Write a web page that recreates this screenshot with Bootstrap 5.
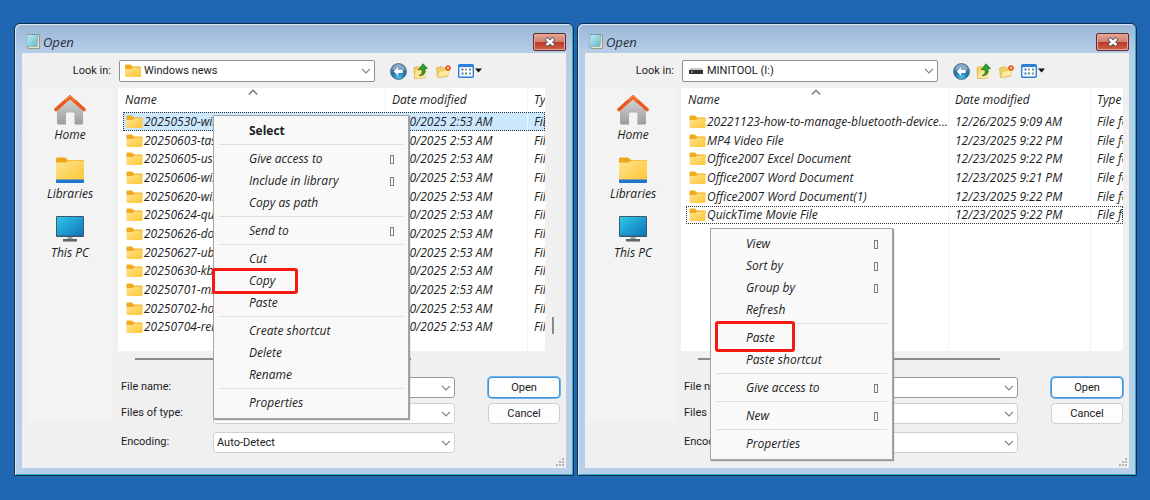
<!DOCTYPE html>
<html lang="en">
<head>
<meta charset="utf-8">
<meta name="viewport" content="width=device-width, initial-scale=1">
<title>Open</title>
<link href="https://cdn.jsdelivr.net/npm/bootstrap@5.3.0/dist/css/bootstrap.min.css" rel="stylesheet">
<style>
  body { background: #1f67b3; font-family: "Open Sans", "Noto Sans", sans-serif; font-size: 12px; line-height: 16px; color: #1c1c1c; }
  .desktop { padding: 23px 13px 24px 14px; gap: 3px; }
  .slant { font-style: italic; }
  .plain { font-family: Roboto, "Liberation Sans", sans-serif; font-size: 11px; }

  /* window frame */
  .dialog { flex: 1 1 0; min-width: 0; border: 1px solid #0f2f52; border-radius: 6px 6px 1px 1px; padding: 0 7px 7px;
    background: linear-gradient(#9bb6d6, #b7cee9 29px, #b7cfea);
    box-shadow: inset 1px 1px 0 #dbe7f4, inset -1px -1px 0 #35aab9; }
  .titlebar { height: 29px; padding: 5px 0 0 3px; }
  .titlebar h1 { font-size: 13px; line-height: 16px; margin: 5px 0 0 2px; font-weight: 400; color: #2a2f3a; }
  .close-btn { width: 33px; height: 18px; padding: 0; border: 1px solid #5d2a33; border-radius: 2px; line-height: 0;
    background: linear-gradient(#e2a496, #d17f6e 50%, #b93a25 50%, #cf5f45); box-shadow: inset 0 0 0 1px #e5a79c; }
  .client { background: #f0f0f0; }

  /* look-in bar */
  .lookbar { height: 35px; padding-top: 7px; }
  .lookbar label { width: 97px; padding: 3px 8px 0 0; }
  .lookbox { width: 256px; height: 22px; border: 1px solid #8f8f8f; border-radius: 2px; background: #fff; padding-left: 5px; }
  .tools { padding: 3px 0 0 15px; gap: 6px; }
  .tools button { border: 0; background: none; padding: 0; line-height: 0; }
  .pick { appearance: none; font-size: 11px; line-height: 16px; color: #1c1c1c; padding: 0 20px 0 3px; border: 1px solid #d0d0d0; border-radius: 3px;
    background: #fff url("data:image/svg+xml,%3Csvg xmlns='http://www.w3.org/2000/svg' width='10' height='6'%3E%3Cpath d='M1 .8 5 4.8 9 .8' fill='none' stroke='%23808080' stroke-width='1.2'/%3E%3C/svg%3E") no-repeat right 3px center; }
  .lookbox .pick { border: 0; flex: 1; height: 20px; }

  /* places bar */
  .client-body { padding-left: 5px; gap: 5px; }
  .places { width: 86px; height: 334px; background: #f3f3f3; padding-top: 6px; }
  .places a { height: 59px; color: #1c1c1c; }
  .places svg { margin-bottom: 1px; }

  /* file list */
  .main-pane { min-width: 0; }
  .list-row { height: 263px; }
  .list-row.edge { padding-right: 6px; }
  .list-box { flex: 1; min-width: 0; background: #fff; overflow: hidden; padding-left: 5px; }
  .files { table-layout: fixed; width: 100%; height: 100%; border-collapse: separate; border-spacing: 0; white-space: nowrap; }
  .files th { height: 24px; font-weight: 400; padding: 0 0 0 2px; position: relative; }
  .files td { padding: 0; line-height: 16px; overflow: hidden; }
  .files tbody tr { height: 19px; }
  .files tbody tr:nth-child(3n) { height: 18px; }
  .files tbody tr.filler { height: auto; }
  .files th + th, .files td + td { border-left: 1px solid #edf4fb; padding-left: 6px; }
  .files .c-name { width: 262px; }
  .files .c-date { width: 142px; }
  .files .name-cell { gap: 1px; padding-left: 3px; }
  .files .sort { position: absolute; left: 125px; top: 1px; }
  .picked { outline: 1px dotted #333; outline-offset: -1px; }
  .picked.hot { background: #cce8ff; }
  .v-track { width: 21px; padding: 229px 0 0 7px; }
  .v-track span { display: block; width: 2px; height: 17px; background: #8b8b8b; }
  .h-track { height: 26px; padding: 7px 0 0 17px; }
  .h-track span { display: block; height: 2px; background: #8b8b8b; }

  /* fields */
  .fields { display: grid; grid-template: 21px 21px 21px / 92px 242px 105px; row-gap: 5px; padding: 0 7px 18px 3px; }
  .fields .r1, .fields .r2, .fields .r3 { height: 21px; }
  .fields .r3 { margin-top: 3px; }
  .fields label { padding-top: 2px; }
  .fields .strong { border-color: #999; }
  .fields button { margin-left: 33px; width: 72px; padding: 0; font-size: 11px; line-height: 16px; border: 1px solid #d0d0d0; border-radius: 4px; background: #fdfdfd; color: #1c1c1c; }
  .fields .go { border-color: #3a93dc; box-shadow: 0 0 0 1px #6fb2e8; }
  .grip { position: absolute; right: 9px; bottom: 9px; }

  /* context menus */
  .ctx { position: absolute; border: 1px solid #a5a5a5; background: #f9f9f9; padding: 4px 0; box-shadow: 1px 1px 1px #9a9a9a; }
  .ctx-left { left: 198px; top: 91px; width: 196px; }
  .ctx-right { left: 132px; top: 204px; width: 183px; }
  .ctx button { display: flex; justify-content: space-between; align-items: center; position: relative; width: 100%; height: 22px; border: 0; background: none;
    padding: 0 14px 0 35px; font-size: 12px; font-style: inherit; line-height: 16px; color: #1c1c1c; }
  .ctx hr { margin: 2px 5px 3px; border: 0; height: 1px; background: #dcdcdc; opacity: 1; }
  .ctx i { width: 4px; height: 9px; border: 1px solid #7d7d7d; }
  .boxed::after { content: ""; position: absolute; border: 3px solid #f5190f; border-radius: 3px; }
  .box-copy::after { left: -2px; top: -2px; bottom: -2px; width: 86px; }
  .box-paste::after { left: 4px; top: -6px; bottom: -3px; width: 80px; }
</style>
</head>
<body>
<svg width="0" height="0" class="position-absolute" aria-hidden="true">
  <defs>
    <linearGradient id="gFold" x1="0" y1="0" x2="1" y2="1"><stop offset="0" stop-color="#ffe391"/><stop offset="1" stop-color="#fcc634"/></linearGradient>
    <linearGradient id="gHome" x1="0" y1="0" x2="0" y2="1"><stop offset="0" stop-color="#d8d8d8"/><stop offset="1" stop-color="#9c9c9c"/></linearGradient>
    <linearGradient id="gPc" x1="0" y1="0" x2="1" y2="1"><stop offset="0" stop-color="#2fc9e6"/><stop offset="1" stop-color="#0f73bd"/></linearGradient>
    <radialGradient id="gBack" cx=".5" cy=".85" r=".8"><stop offset="0" stop-color="#4cc6ea"/><stop offset=".5" stop-color="#2370a8"/><stop offset="1" stop-color="#5f7f9c"/></radialGradient>
    <linearGradient id="gPad" x1="0" y1="0" x2="1" y2="1"><stop offset="0" stop-color="#c9f1f5"/><stop offset="1" stop-color="#5db7c8"/></linearGradient>
  </defs>
  <symbol id="folder" viewBox="0 0 16 14"><path d="M0 1.5Q0 .5 1 .5H5.5L7.5 2.5H15Q16 2.5 16 3.500V6H0Z" fill="#f2ab1c"/><path d="M0 5H6L8 3.500H15Q16 3.500 16 4.500V12Q16 13 15 13H1Q0 13 0 12Z" fill="url(#gFold)"/></symbol>
  <symbol id="home" viewBox="0 0 32 32"><path d="M3 14 16 3 29 14V29Q29 30.500 27.500 30.500H20.500V20Q20.500 18.500 19 18.500H13.500Q12 18.500 12 20V30.500H5Q3 30.500 3 29Z" fill="url(#gHome)"/><path d="M2 15.500 16 3 30 15.500" fill="none" stroke="#ea5a20" stroke-width="3.600" stroke-linejoin="round" stroke-linecap="round"/><path d="M11 6.500 16 2.200 21 6.500" fill="none" stroke="#f58a3c" stroke-width="1.500"/></symbol>
  <symbol id="library" viewBox="0 0 32 32"><path d="M2 6Q2 4.500 3.500 4.500H11L14 7H29Q30 7 30 8V14H2Z" fill="#efa51a"/><path d="M2 9.500H12L14.500 7.500H29Q30 7.500 30 8.500V28H2Z" fill="url(#gFold)"/><path d="M2 26.500H30V29Q30 30 29 30H3Q2 30 2 29Z" fill="#1b76cc"/></symbol>
  <symbol id="pc" viewBox="0 0 32 32"><rect x="2" y="4" width="28" height="21" rx="1" fill="#3c5a6b"/><rect x="3" y="5" width="26" height="18.500" fill="url(#gPc)"/><path d="M13.500 25H18.500V27H13.500Z" fill="#9aa3a8"/><path d="M9 27H23V29.500H9Z" fill="#59636a"/></symbol>
  <symbol id="notepad" viewBox="0 0 16 16"><path d="M3 2H14.500V15.500H3Z" fill="#e9e2c4" stroke="#8f8a72" stroke-width=".8"/><path d="M2.500 1.500H13L12 13.500H1Z" fill="url(#gPad)" stroke="#7ba9b8" stroke-width=".6"/><path d="M3 1.500H13" stroke="#777" stroke-width="1.200" stroke-dasharray="1 1"/></symbol>
  <symbol id="back" viewBox="0 0 16 16"><circle cx="8" cy="8" r="7.500" fill="url(#gBack)" stroke="#43617c" stroke-width=".7"/><path d="M1.800 6Q4 1.200 8 1.200T14.200 6Q8 8 1.800 6Z" fill="#dbe8f2" opacity=".45"/><path d="M7.500 4 3.500 8 7.500 12V9.300H12V6.700H7.500Z" fill="#fff"/></symbol>
  <symbol id="up" viewBox="0 0 16 16"><path d="M1 4.500 5 3.500 6 5H12V15L1.500 15.500Z" fill="#f2cf62" stroke="#d3a534" stroke-width=".6"/><path d="M3 8H14L12 15H1.500Z" fill="#fbe594"/><path d="M6 12.500Q10 12 9 6.500H5.500L10 .8 14.500 5.500H12Q13 13 6 12.500Z" fill="#33a02c" stroke="#156b1b" stroke-width=".7"/></symbol>
  <symbol id="newfolder" viewBox="0 0 16 16"><path d="M1 5 6 3.500 7 5H12V13.500L2 14.500Z" fill="#f2cf62" stroke="#d3a534" stroke-width=".6"/><path d="M4 8.500 14.500 6.500 12 13 2 14.500Z" fill="#fdeaa4" stroke="#dfb64d" stroke-width=".5"/><g stroke="#e8491d" stroke-width="1.300"><path d="M12.500 2V8M9.500 5H15.500M10.500 3 14.500 7M14.500 3 10.500 7"/></g><circle cx="12.500" cy="5" r="1.200" fill="#ffd27a"/></symbol>
  <symbol id="views" viewBox="0 0 24 16"><rect x=".7" y="1.700" width="14.600" height="12.600" rx="1" fill="#fff" stroke="#2c7fdb" stroke-width="1.400"/><path d="M1 3H15" stroke="#2c7fdb" stroke-width="2.200"/><path d="M3.500 6.500H5.500M3.500 10.500H5.500" stroke="#4a70d8" stroke-width="2"/><path d="M7 6.500H9M11 10.500H13" stroke="#8a8fc8" stroke-width="2"/><path d="M11 6.500H13M7 10.500H9" stroke="#4aa04a" stroke-width="2"/><path d="M17 5.500H24L20.500 9.500Z" fill="#111"/></symbol>
  <symbol id="drive" viewBox="0 0 14 6"><path d="M2 0H12L14 2H0Z" fill="#c5c5c5"/><rect y="2" width="14" height="4" rx=".5" fill="#333"/><rect x="2" y="3.200" width="2" height="1.600" fill="#35d04a"/></symbol>
  <symbol id="cross" viewBox="0 0 12 10"><path d="M2 1.500 10 8.500M10 1.500 2 8.500" stroke="#4c4c5a" stroke-width="4"/><path d="M2.500 2 9.500 8M9.500 2 2.500 8" stroke="#fff" stroke-width="2.400"/></symbol>
  <symbol id="caret" viewBox="0 0 8 5"><path d="M.5 4.500 4 1 7.500 4.500" fill="none" stroke="#777" stroke-width="1.200"/></symbol>
  <symbol id="dots" viewBox="0 0 8 8"><path d="M6 0H8V2H6ZM3 3H5V5H3ZM6 3H8V5H6ZM0 6H2V8H0ZM3 6H5V8H3ZM6 6H8V8H6Z" fill="#b5b5b5"/></symbol>
</svg>

<main class="desktop d-flex align-items-start">
  <section class="dialog position-relative">
    <header class="titlebar d-flex slant">
      <svg width="16" height="16" class="mt-1"><use href="#notepad"/></svg>
      <h1>Open</h1>
      <button class="close-btn ms-auto mt-1" aria-label="Close"><svg width="12" height="10"><use href="#cross"/></svg></button>
    </header>
    <div class="client">
      <div class="lookbar d-flex plain">
        <label for="look1" class="text-end">Look in:</label>
        <div class="lookbox d-flex align-items-center"><svg width="16" height="14"><use href="#folder"/></svg><select id="look1" class="pick plain"><option>Windows news</option></select></div>
        <div class="tools d-flex align-items-start">
          <button aria-label="Back"><svg width="17" height="17"><use href="#back"/></svg></button>
          <button aria-label="Up one level"><svg width="16" height="16"><use href="#up"/></svg></button>
          <button aria-label="New folder"><svg width="17" height="16"><use href="#newfolder"/></svg></button>
          <button aria-label="View menu"><svg width="24" height="16"><use href="#views"/></svg></button>
        </div>
      </div>
      <div class="client-body d-flex">
        <nav class="places flex-shrink-0 slant">
          <a href="#" class="d-flex flex-column align-items-center text-decoration-none"><svg width="32" height="32"><use href="#home"/></svg>Home</a>
          <a href="#" class="d-flex flex-column align-items-center text-decoration-none"><svg width="32" height="32"><use href="#library"/></svg>Libraries</a>
          <a href="#" class="d-flex flex-column align-items-center text-decoration-none"><svg width="32" height="32"><use href="#pc"/></svg>This PC</a>
        </nav>
        <div class="main-pane flex-grow-1">
          <div class="list-row d-flex">
            <div class="list-box slant">
              <table class="files">
                <thead><tr><th class="c-name">Name<svg class="sort" width="10" height="6"><use href="#caret"/></svg></th><th class="c-date">Date modified</th><th>Type</th></tr></thead>
                <tbody>
                  <tr class="picked hot"><td><div class="name-cell d-flex align-items-center"><svg width="17" height="14"><use href="#folder"/></svg>20250530-windows</div></td><td>1/30/2025 2:53 AM</td><td>File folder</td></tr>
                  <tr><td><div class="name-cell d-flex align-items-center"><svg width="17" height="14"><use href="#folder"/></svg>20250603-taskbar</div></td><td>1/30/2025 2:53 AM</td><td>File folder</td></tr>
                  <tr><td><div class="name-cell d-flex align-items-center"><svg width="17" height="14"><use href="#folder"/></svg>20250605-usb</div></td><td>1/30/2025 2:53 AM</td><td>File folder</td></tr>
                  <tr><td><div class="name-cell d-flex align-items-center"><svg width="17" height="14"><use href="#folder"/></svg>20250606-windows</div></td><td>1/30/2025 2:53 AM</td><td>File folder</td></tr>
                  <tr><td><div class="name-cell d-flex align-items-center"><svg width="17" height="14"><use href="#folder"/></svg>20250620-windows</div></td><td>1/30/2025 2:53 AM</td><td>File folder</td></tr>
                  <tr><td><div class="name-cell d-flex align-items-center"><svg width="17" height="14"><use href="#folder"/></svg>20250624-quick</div></td><td>1/30/2025 2:53 AM</td><td>File folder</td></tr>
                  <tr><td><div class="name-cell d-flex align-items-center"><svg width="17" height="14"><use href="#folder"/></svg>20250626-dolby</div></td><td>1/30/2025 2:53 AM</td><td>File folder</td></tr>
                  <tr><td><div class="name-cell d-flex align-items-center"><svg width="17" height="14"><use href="#folder"/></svg>20250627-ubuntu</div></td><td>1/30/2025 2:53 AM</td><td>File folder</td></tr>
                  <tr><td><div class="name-cell d-flex align-items-center"><svg width="17" height="14"><use href="#folder"/></svg>20250630-kb50</div></td><td>1/30/2025 2:53 AM</td><td>File folder</td></tr>
                  <tr><td><div class="name-cell d-flex align-items-center"><svg width="17" height="14"><use href="#folder"/></svg>20250701-microsoft</div></td><td>1/30/2025 2:53 AM</td><td>File folder</td></tr>
                  <tr><td><div class="name-cell d-flex align-items-center"><svg width="17" height="14"><use href="#folder"/></svg>20250702-how</div></td><td>1/30/2025 2:53 AM</td><td>File folder</td></tr>
                  <tr><td><div class="name-cell d-flex align-items-center"><svg width="17" height="14"><use href="#folder"/></svg>20250704-rename</div></td><td>1/30/2025 2:53 AM</td><td>File folder</td></tr>
                  <tr class="filler"><td></td><td></td><td></td></tr>
                </tbody>
              </table>
            </div>
            <div class="v-track"><span></span></div>
          </div>
          <div class="h-track"><span style="width:64%"></span></div>
          <div class="fields plain">
            <label class="r1" for="name1">File name:</label><select id="name1" class="pick plain r1 strong"><option></option></select><button class="r1 go">Open</button>
            <label class="r2" for="type1">Files of type:</label><select id="type1" class="pick plain r2"><option>Text Documents (*.txt)</option></select><button class="r2">Cancel</button>
            <label class="r3" for="enc1">Encoding:</label><select id="enc1" class="pick plain r3"><option>Auto-Detect</option></select>
          </div>
        </div>
      </div>
    </div>
    <svg class="grip" width="8" height="8"><use href="#dots"/></svg>
    <div class="ctx ctx-left slant">
      <button class="fw-bold fst-normal">Select</button>
      <hr>
      <button>Give access to<i></i></button>
      <button>Include in library<i></i></button>
      <button>Copy as path</button>
      <hr>
      <button>Send to<i></i></button>
      <hr>
      <button>Cut</button>
      <button class="boxed box-copy">Copy</button>
      <button>Paste</button>
      <hr>
      <button>Create shortcut</button>
      <button>Delete</button>
      <button>Rename</button>
      <hr>
      <button>Properties</button>
    </div>
  </section>

  <section class="dialog position-relative">
    <header class="titlebar d-flex slant">
      <svg width="16" height="16" class="mt-1"><use href="#notepad"/></svg>
      <h1>Open</h1>
      <button class="close-btn ms-auto mt-1" aria-label="Close"><svg width="12" height="10"><use href="#cross"/></svg></button>
    </header>
    <div class="client">
      <div class="lookbar d-flex plain">
        <label for="look2" class="text-end">Look in:</label>
        <div class="lookbox d-flex align-items-center"><svg width="16" height="6"><use href="#drive"/></svg><select id="look2" class="pick plain"><option>MINITOOL (I:)</option></select></div>
        <div class="tools d-flex align-items-start">
          <button aria-label="Back"><svg width="17" height="17"><use href="#back"/></svg></button>
          <button aria-label="Up one level"><svg width="16" height="16"><use href="#up"/></svg></button>
          <button aria-label="New folder"><svg width="17" height="16"><use href="#newfolder"/></svg></button>
          <button aria-label="View menu"><svg width="24" height="16"><use href="#views"/></svg></button>
        </div>
      </div>
      <div class="client-body d-flex">
        <nav class="places flex-shrink-0 slant">
          <a href="#" class="d-flex flex-column align-items-center text-decoration-none"><svg width="32" height="32"><use href="#home"/></svg>Home</a>
          <a href="#" class="d-flex flex-column align-items-center text-decoration-none"><svg width="32" height="32"><use href="#library"/></svg>Libraries</a>
          <a href="#" class="d-flex flex-column align-items-center text-decoration-none"><svg width="32" height="32"><use href="#pc"/></svg>This PC</a>
        </nav>
        <div class="main-pane flex-grow-1">
          <div class="list-row edge d-flex">
            <div class="list-box slant">
              <table class="files">
                <thead><tr><th class="c-name">Name<svg class="sort" width="10" height="6"><use href="#caret"/></svg></th><th class="c-date">Date modified</th><th>Type</th></tr></thead>
                <tbody>
                  <tr><td><div class="name-cell d-flex align-items-center"><svg width="17" height="14"><use href="#folder"/></svg>20221123-how-to-manage-bluetooth-device...</div></td><td>12/26/2025 9:09 AM</td><td>File folder</td></tr>
                  <tr><td><div class="name-cell d-flex align-items-center"><svg width="17" height="14"><use href="#folder"/></svg>MP4 Video File</div></td><td>12/23/2025 9:22 PM</td><td>File folder</td></tr>
                  <tr><td><div class="name-cell d-flex align-items-center"><svg width="17" height="14"><use href="#folder"/></svg>Office2007 Excel Document</div></td><td>12/23/2025 9:22 PM</td><td>File folder</td></tr>
                  <tr><td><div class="name-cell d-flex align-items-center"><svg width="17" height="14"><use href="#folder"/></svg>Office2007 Word Document</div></td><td>12/23/2025 9:21 PM</td><td>File folder</td></tr>
                  <tr><td><div class="name-cell d-flex align-items-center"><svg width="17" height="14"><use href="#folder"/></svg>Office2007 Word Document(1)</div></td><td>12/23/2025 9:22 PM</td><td>File folder</td></tr>
                  <tr class="picked"><td><div class="name-cell d-flex align-items-center"><svg width="17" height="14"><use href="#folder"/></svg>QuickTime Movie File</div></td><td>12/23/2025 9:22 PM</td><td>File folder</td></tr>
                  <tr class="filler"><td></td><td></td><td></td></tr>
                </tbody>
              </table>
            </div>
          </div>
          <div class="h-track"><span style="width:70%"></span></div>
          <div class="fields plain">
            <label class="r1" for="name2">File name:</label><select id="name2" class="pick plain r1 strong"><option></option></select><button class="r1 go">Open</button>
            <label class="r2" for="type2">Files of type:</label><select id="type2" class="pick plain r2"><option></option></select><button class="r2">Cancel</button>
            <label class="r3" for="enc2">Encoding:</label><select id="enc2" class="pick plain r3"><option></option></select>
          </div>
        </div>
      </div>
    </div>
    <svg class="grip" width="8" height="8"><use href="#dots"/></svg>
    <div class="ctx ctx-right slant">
      <button>View<i></i></button>
      <button>Sort by<i></i></button>
      <button>Group by<i></i></button>
      <button>Refresh</button>
      <hr>
      <button class="boxed box-paste">Paste</button>
      <button>Paste shortcut</button>
      <hr>
      <button>Give access to<i></i></button>
      <hr>
      <button>New<i></i></button>
      <hr>
      <button>Properties</button>
    </div>
  </section>
</main>
<script src="https://cdn.jsdelivr.net/npm/bootstrap@5.3.0/dist/js/bootstrap.bundle.min.js"></script>
</body>
</html>
